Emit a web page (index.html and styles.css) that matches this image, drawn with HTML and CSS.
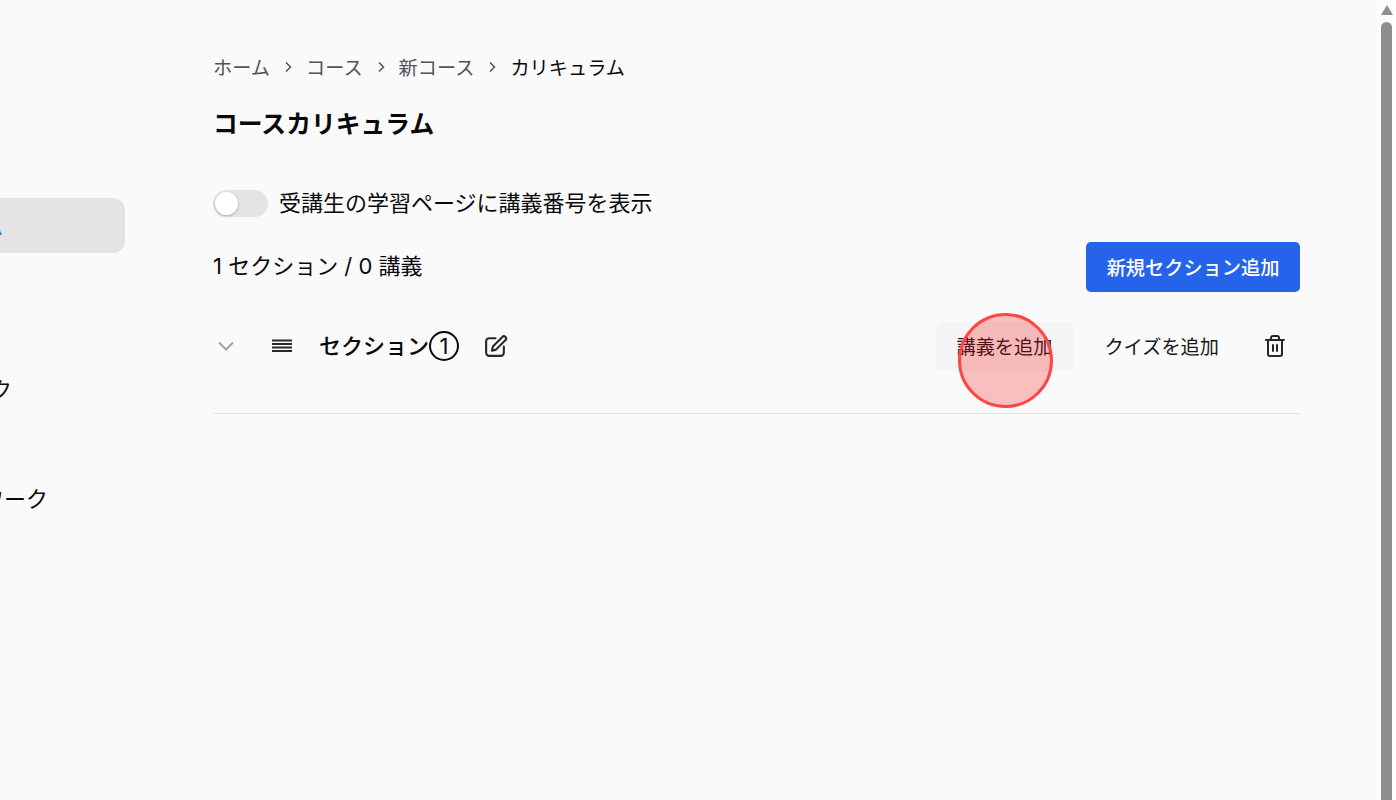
FILE: index.html
```html
<!DOCTYPE html>
<html lang="ja">
<head>
    <meta charset="UTF-8">
    <title>コースカリキュラム</title>
    <link rel="stylesheet" href="styles.css">
</head>
<body>
    <div class="page">
        <aside class="sidebar">
            <div class="side-item side-active"><span class="side-label side-blue">ム</span></div>
            <div class="side-item side-one"><span class="side-label">フィードバック</span></div>
            <div class="side-item side-two"><span class="side-label">ネットワーク</span></div>
        </aside>

        <main class="main">
            <nav class="breadcrumb">
                <span class="crumb">ホーム</span>
                <svg class="crumb-sep" viewBox="0 0 12 12"><path d="M4 1.5 8.5 6 4 10.5"/></svg>
                <span class="crumb">コース</span>
                <svg class="crumb-sep" viewBox="0 0 12 12"><path d="M4 1.5 8.5 6 4 10.5"/></svg>
                <span class="crumb">新コース</span>
                <svg class="crumb-sep" viewBox="0 0 12 12"><path d="M4 1.5 8.5 6 4 10.5"/></svg>
                <span class="crumb crumb-current">カリキュラム</span>
            </nav>

            <h1 class="title">コースカリキュラム</h1>

            <div class="toggle-row">
                <span class="toggle"><span class="toggle-knob"></span></span>
                <span class="toggle-label">受講生の学習ページに講義番号を表示</span>
            </div>

            <div class="count-row">
                <span class="count">1 セクション / 0 講義</span>
                <button class="btn-primary">新規セクション追加</button>
            </div>

            <div class="section-row">
                <svg class="icon-chevron" viewBox="0 0 20 20"><path d="M3 6.5 10 13.5 17 6.5"/></svg>
                <svg class="icon-menu" viewBox="0 0 20 14"><path d="M0 1.5H20M0 5H20M0 8.5H20M0 12H20"/></svg>
                <span class="section-name">セクション<span class="circled">1</span></span>
                <svg class="icon-edit" viewBox="0 0 24 24"><path d="M12 4H6a3 3 0 0 0-3 3v11a3 3 0 0 0 3 3h11a3 3 0 0 0 3-3v-6"/><path d="M18.6 2.8a2.1 2.1 0 0 1 3 3L12.5 15l-4 1 1-4z"/></svg>
                <div class="section-actions">
                    <button class="btn-ghost btn-hover">講義を追加</button>
                    <button class="btn-ghost">クイズを追加</button>
                    <svg class="icon-trash" viewBox="0 0 24 24"><path d="M3 6h18M8 6V4a2 2 0 0 1 2-2h4a2 2 0 0 1 2 2v2M5 6v14a2 2 0 0 0 2 2h10a2 2 0 0 0 2-2V6M10 11v6M14 11v6"/></svg>
                </div>
            </div>
        </main>

        <div class="scrollbar">
            <span class="scroll-arrow"></span>
            <span class="scroll-thumb"></span>
        </div>
    </div>

    <div class="click-marker"></div>
</body>
</html>
```

FILE: styles.css
```css
* {
    box-sizing: border-box;
}
html, body {
    height: 100%;
}
body {
    margin: 0;
    overflow: hidden;
    background-color: #fafafa;
    color: #09090b;
    font-family: Inter, "Noto Sans CJK JP", sans-serif;
}
.page {
    display: flex;
    height: 800px;
}

/* sidebar, scrolled off to the left */
.sidebar {
    width: 125px;
    flex-shrink: 0;
    overflow: hidden;
    padding-top: 198px;
}
.side-item {
    display: flex;
    justify-content: flex-end;
    align-items: center;
    white-space: nowrap;
    font-size: 22px;
    line-height: 32px;
}
.side-active {
    height: 55px;
    background-color: #e4e4e7;
    border-radius: 0 12px 12px 0;
    justify-content: flex-start;
}
.side-label {
    display: block;
}
.side-blue {
    color: #2563eb;
    margin-left: -19px;
}
.side-one {
    margin-top: 121px;
    padding-right: 113px;
}
.side-two {
    margin-top: 77px;
    padding-right: 77px;
}

.main {
    flex: 1;
    min-width: 0;
    padding: 52px 77px 0 88px;
}
.breadcrumb {
    display: flex;
    align-items: center;
    height: 29px;
    font-size: 19.2px;
    color: #52525b;
}
.crumb-sep {
    width: 12px;
    height: 12px;
    margin: 0 12px;
    fill: none;
    stroke: #52525b;
    stroke-width: 1.5;
}
.crumb-current {
    color: #09090b;
}
.title {
    margin: 25px 0 0;
    font-size: 24.8px;
    line-height: 36px;
    font-weight: 700;
}
.toggle-row {
    display: flex;
    align-items: center;
    gap: 11px;
    margin-top: 45px;
}
.toggle {
    display: block;
    width: 55px;
    height: 27px;
    padding: 2px;
    border-radius: 14px;
    background-color: #e4e4e7;
}
.toggle-knob {
    display: block;
    width: 23px;
    height: 23px;
    border-radius: 50%;
    background-color: #fff;
    box-shadow: 0 1px 3px rgba(0, 0, 0, 0.25);
}
.toggle-label {
    font-size: 22px;
    line-height: 32px;
}
.count-row {
    display: flex;
    justify-content: space-between;
    align-items: center;
    margin-top: 23px;
}
.count {
    padding-bottom: 6px;
    font-size: 22px;
}
.btn-primary {
    width: 214px;
    height: 50px;
    border: none;
    border-radius: 5px;
    background-color: #2563eb;
    color: #fff;
    font-family: inherit;
    font-size: 19.2px;
    font-weight: 500;
}
.section-row {
    display: flex;
    align-items: center;
    height: 122px;
    padding-bottom: 13px;
    border-bottom: 1px solid #e4e4e7;
}
.icon-chevron {
    width: 20px;
    height: 20px;
    margin-left: 3px;
    fill: none;
    stroke: #a1a1aa;
    stroke-width: 2;
}
.icon-menu {
    width: 20px;
    height: 14px;
    margin-left: 36px;
    fill: none;
    stroke: #27272a;
    stroke-width: 1.8;
}
.section-name {
    display: flex;
    align-items: center;
    margin-left: 27px;
    font-size: 22px;
    line-height: 32px;
    font-weight: 500;
}
.circled {
    display: flex;
    justify-content: center;
    align-items: center;
    width: 30px;
    height: 30px;
    border: 2px solid #09090b;
    border-radius: 50%;
    font-size: 22px;
    font-weight: 400;
}
.icon-edit, .icon-trash {
    fill: none;
    stroke: #27272a;
    stroke-width: 2;
    stroke-linecap: round;
    stroke-linejoin: round;
}
.icon-edit {
    width: 25px;
    height: 25px;
    margin-left: 24px;
}
.section-actions {
    display: flex;
    align-items: center;
    margin-left: auto;
}
.btn-ghost {
    height: 49px;
    padding: 0 21px;
    border: none;
    border-radius: 6px;
    background: none;
    color: #18181b;
    font-family: inherit;
    font-size: 19.2px;
    white-space: nowrap;
}
.btn-hover {
    background-color: #f4f4f5;
}
.btn-ghost + .btn-ghost {
    margin-left: 10px;
}
.icon-trash {
    width: 24px;
    height: 24px;
    margin: 0 13px 0 23px;
}

/* browser scrollbar */
.scrollbar {
    width: 19px;
    flex-shrink: 0;
    padding: 5px 4px 0;
    background-color: #fdfdfd;
}
.scroll-arrow {
    display: block;
    width: 0;
    height: 0;
    margin: 0 auto;
    border-left: 6px solid transparent;
    border-right: 6px solid transparent;
    border-bottom: 10px solid #8f8f8f;
}
.scroll-thumb {
    display: block;
    height: 800px;
    margin-top: 7px;
    border-radius: 6px 6px 0 0;
    background-color: #8f8f8f;
}

/* recorded click indicator */
.click-marker {
    position: absolute;
    left: 958px;
    top: 313px;
    width: 95px;
    height: 95px;
    border: 3px solid #ff4646;
    border-radius: 50%;
    background-color: rgba(255, 0, 0, 0.24);
}
```
